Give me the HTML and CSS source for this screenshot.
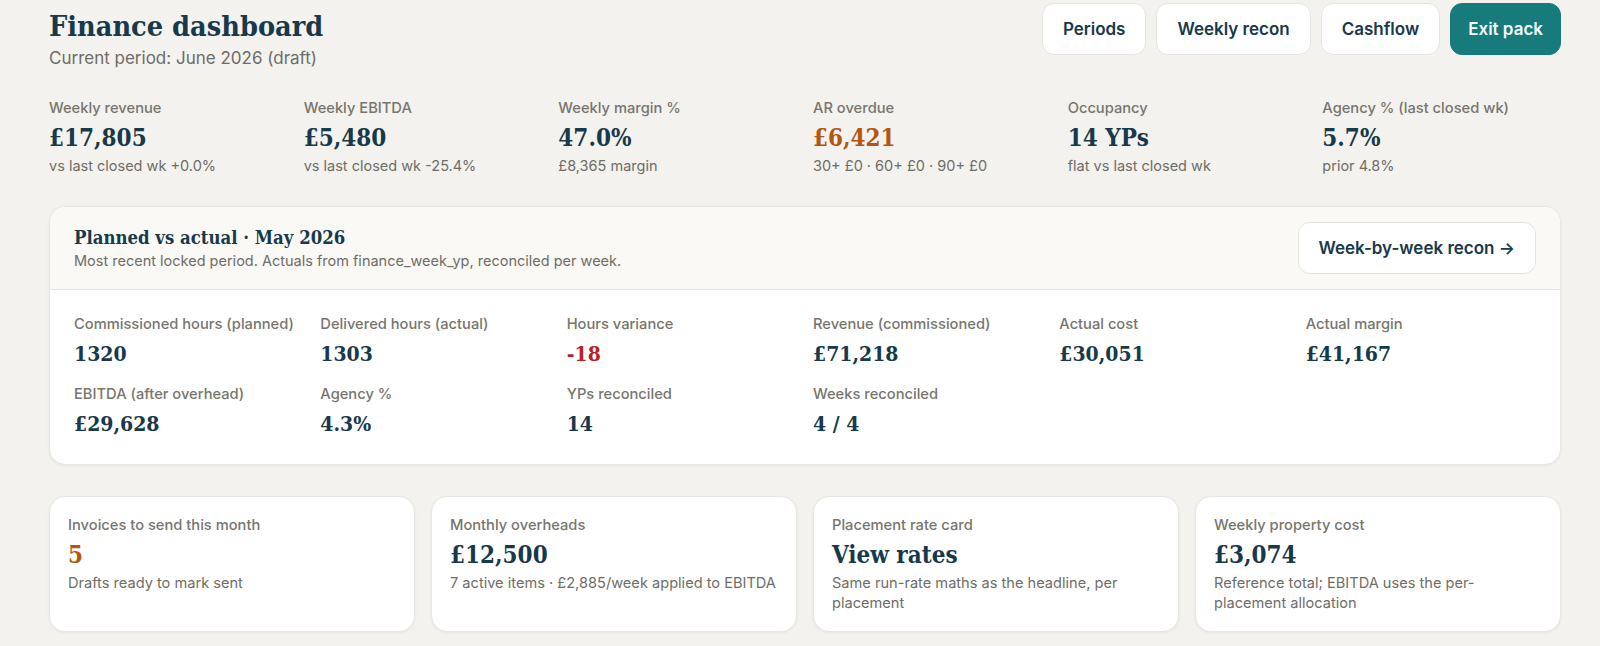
FILE: index.html
```html
<!doctype html>
<html lang="en">
 <head>
  <meta charset="utf-8">
  <meta name="viewport" content="width=device-width, initial-scale=1.0">
  <title>Finance dashboard</title>
  <link rel="stylesheet" href="styles.css">
 </head>
 <body>
  <div class="page">
   <header class="page-header">
    <div class="page-title">
     <h1>Finance dashboard</h1>
     <p class="page-sub">Current period: June 2026 (draft)</p>
    </div>
    <nav class="header-actions">
     <a class="btn">Periods</a>
     <a class="btn">Weekly recon</a>
     <a class="btn">Cashflow</a>
     <a class="btn btn-primary">Exit pack</a>
    </nav>
   </header>

   <!-- headline numbers -->
   <section class="kpis">
    <div class="kpi">
     <div class="label">Weekly revenue</div>
     <div class="value">£17,805</div>
     <div class="note">vs last closed wk +0.0%</div>
    </div>
    <div class="kpi">
     <div class="label">Weekly EBITDA</div>
     <div class="value">£5,480</div>
     <div class="note">vs last closed wk -25.4%</div>
    </div>
    <div class="kpi">
     <div class="label">Weekly margin %</div>
     <div class="value">47.0%</div>
     <div class="note">£8,365 margin</div>
    </div>
    <div class="kpi">
     <div class="label">AR overdue</div>
     <div class="value warn">£6,421</div>
     <div class="note">30+ £0 · 60+ £0 · 90+ £0</div>
    </div>
    <div class="kpi">
     <div class="label">Occupancy</div>
     <div class="value">14 YPs</div>
     <div class="note">flat vs last closed wk</div>
    </div>
    <div class="kpi">
     <div class="label">Agency % (last closed wk)</div>
     <div class="value">5.7%</div>
     <div class="note">prior 4.8%</div>
    </div>
   </section>

   <!-- last locked period -->
   <section class="card recon">
    <div class="recon-head">
     <div>
      <h2>Planned vs actual · May 2026</h2>
      <p class="recon-sub">Most recent locked period. Actuals from finance_week_yp, reconciled per week.</p>
     </div>
     <a class="btn">Week-by-week recon →</a>
    </div>
    <div class="recon-body">
     <div class="metric"><div class="label">Commissioned hours (planned)</div><div class="value">1320</div></div>
     <div class="metric"><div class="label">Delivered hours (actual)</div><div class="value">1303</div></div>
     <div class="metric"><div class="label">Hours variance</div><div class="value bad">-18</div></div>
     <div class="metric"><div class="label">Revenue (commissioned)</div><div class="value">£71,218</div></div>
     <div class="metric"><div class="label">Actual cost</div><div class="value">£30,051</div></div>
     <div class="metric"><div class="label">Actual margin</div><div class="value">£41,167</div></div>
     <div class="metric"><div class="label">EBITDA (after overhead)</div><div class="value">£29,628</div></div>
     <div class="metric"><div class="label">Agency %</div><div class="value">4.3%</div></div>
     <div class="metric"><div class="label">YPs reconciled</div><div class="value">14</div></div>
     <div class="metric"><div class="label">Weeks reconciled</div><div class="value">4 / 4</div></div>
    </div>
   </section>

   <section class="tiles">
    <div class="card tile">
     <div class="label">Invoices to send this month</div>
     <div class="value warn">5</div>
     <div class="tile-note">Drafts ready to mark sent</div>
    </div>
    <div class="card tile">
     <div class="label">Monthly overheads</div>
     <div class="value">£12,500</div>
     <div class="tile-note">7 active items · £2,885/week applied to EBITDA</div>
    </div>
    <div class="card tile">
     <div class="label">Placement rate card</div>
     <div class="value">View rates</div>
     <div class="tile-note">Same run-rate maths as the headline, per placement</div>
    </div>
    <div class="card tile">
     <div class="label">Weekly property cost</div>
     <div class="value">£3,074</div>
     <div class="tile-note">Reference total; EBITDA uses the per-placement allocation</div>
    </div>
   </section>
  </div>
 </body>
</html>
```

FILE: styles.css
```css
body {
	margin: 0;
	padding: 0;
	background-color: #f3f2ee;
	color: #17394b;
	font-family: Inter, "Noto Sans", sans-serif;
}

.page {
	padding: 3px 39px 24px 49px;
}

/* top bar */
.page-header {
	display: flex;
	justify-content: space-between;
	align-items: flex-start;
}

.page-title {
	padding-top: 5px;
}

/* display numbers and headings use the condensed serif face */
h1, h2, .value {
	font-family: "DejaVu Serif", "Liberation Serif", serif;
	font-stretch: condensed;
	font-weight: bold;
	color: #17394b;
}

h1 {
	margin: 0;
	font-size: 28.6px;
	line-height: 36px;
}

.page-sub {
	margin: 2px 0 0;
	font-size: 17px;
	line-height: 24px;
	color: #6e6c66;
}

.header-actions {
	display: flex;
	gap: 10px;
}

.btn {
	display: inline-flex;
	align-items: center;
	height: 52px;
	box-sizing: border-box;
	padding: 0 20px;
	background: #ffffff;
	border: 1px solid #e6e4de;
	border-radius: 12px;
	font-size: 17px;
	font-weight: 600;
	color: #17394b;
	white-space: nowrap;
}

.btn-primary {
	padding: 0 17px;
	background: #167b7a;
	border-color: #167b7a;
	color: #f4fbfa;
}

/* shared label / value / note */
.label {
	font-size: 14.7px;
	line-height: 20px;
	font-weight: 500;
	color: #77756d;
}

.value {
	margin-top: 4px;
	font-size: 24px;
	line-height: 32px;
}

.value.warn {
	color: #b4560f;
}

.value.bad {
	color: #b8221f;
}

.note {
	margin-top: 2px;
	font-size: 14.5px;
	line-height: 20px;
	color: #6f6d66;
}

.kpis {
	display: grid;
	grid-template-columns: repeat(6, 1fr);
	gap: 16px;
	margin-top: 28px;
}

/* cards */
.card {
	background: #ffffff;
	border: 1px solid #e8e6e0;
	border-radius: 16px;
	box-shadow: 0 1px 3px rgba(40, 36, 28, 0.06);
}

.recon {
	margin-top: 30px;
	overflow: hidden;
}

.recon-head {
	display: flex;
	justify-content: space-between;
	align-items: center;
	padding: 15px 24px;
	background: #faf9f6;
	border-bottom: 1px solid #e8e6e0;
}

h2 {
	margin: 0;
	font-size: 18.4px;
	line-height: 26px;
}

.recon-sub {
	margin: 0;
	font-size: 14.5px;
	line-height: 20px;
	color: #6f6d66;
}

.recon-body {
	display: grid;
	grid-template-columns: repeat(6, 1fr);
	column-gap: 16px;
	row-gap: 16px;
	padding: 24px 24px 26px;
}

.metric .value {
	margin-top: 6px;
	font-size: 21px;
	line-height: 28px;
}

.tiles {
	display: grid;
	grid-template-columns: repeat(4, 1fr);
	gap: 16px;
	margin-top: 31px;
}

.tile {
	padding: 18px 18px;
}

.tile-note {
	margin-top: 3px;
	font-size: 14.6px;
	line-height: 19.5px;
	color: #6f6d66;
}
```
